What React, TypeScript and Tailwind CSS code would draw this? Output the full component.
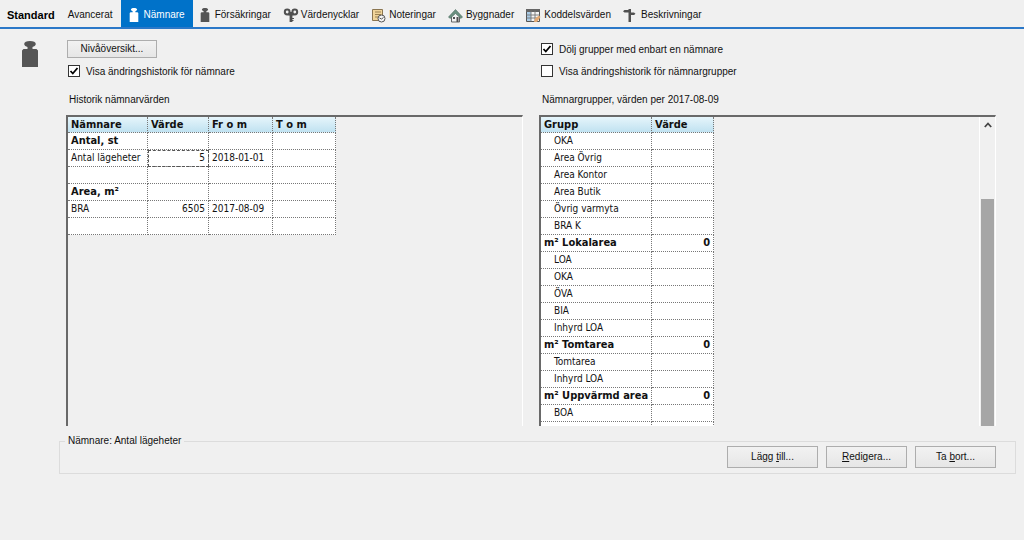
import { useState } from "react";
import type { ReactNode } from "react";

function WeightIcon({ className }: { className: string }) {
  return (
    <svg viewBox="0 0 16 26" className={className} fill="currentColor">
      <path d="M8 0c3.500 0 5.800 1.300 5.800 3S12 5.500 10.500 6v2H14.500L16 9.500V26H0V9.500L1.500 8h4V6C4 5.500 2.200 4.700 2.200 3S4.500 0 8 0z" />
    </svg>
  );
}

function KeysIcon() {
  return (
    <svg viewBox="0 0 16 16" className="h-4 w-4" fill="none" stroke="#505050" strokeWidth="2">
      <circle cx="4.200" cy="5" r="2.400" />
      <circle cx="11.800" cy="5" r="2.400" />
      <path d="M5.500 7l2.500.8L10.500 7M8 5v10" strokeWidth="2.800" />
      <path d="M9 11.500h2M9 13.500h1.500" strokeWidth="1" />
    </svg>
  );
}

function NotesIcon() {
  return (
    <svg viewBox="0 0 16 16" className="h-4 w-4" fill="none">
      <path d="M1.500 2.500h10v11h-10z" fill="#f0d49a" stroke="#8a7550" />
      <path d="M4 5h6M4 7.500h6M4 10h3" stroke="#9a8050" />
      <circle cx="10.500" cy="11.500" r="3.500" fill="#f4f4f4" stroke="#555" />
      <path d="M8.500 11l2 1 2-1.500" stroke="#555" />
    </svg>
  );
}

function HouseIcon() {
  return (
    <svg viewBox="0 0 16 16" className="h-4 w-4">
      <path d="M3.500 9l4-4 4 4v6h-8z" fill="#f2f2f2" stroke="#666" />
      <path d="M.5 10l7-7.500 7 7.500L13 11.500l-5.500-5L2 11.500z" fill="#6b9080" stroke="#4d6b60" strokeWidth=".6" />
      <path d="M5 10h2v2H5zM8.500 10h2v5h-2z" fill="#505050" />
    </svg>
  );
}

function GridIcon() {
  return (
    <svg viewBox="0 0 16 16" className="h-4 w-4" fill="none">
      <path d="M.5 2.500h13v12H.5z" fill="#f5f5f5" stroke="#555" />
      <path d="M0 2h14v3H0z" fill="#666" />
      <path d="M1 5h4v9H1z" fill="#a9cbe6" />
      <path d="M.5 8h13M.5 11h13M5 3.500v11M9 3.500v11" stroke="#777" strokeWidth=".9" />
      <path d="M8 15l1-3.500 4-3 1.500 1.500-3.500 5z" fill="#e3a972" />
    </svg>
  );
}

function SignIcon() {
  return (
    <svg viewBox="0 0 16 16" className="h-4 w-4" fill="#505050">
      <path d="M5.500 2h2.500v13H5.500zM1.500 3h4v2.500h-4L0 4.200zM8 5.500h3l1.500 1.200L11 8H8z" />
    </svg>
  );
}

const tabs: { label: string; icon: ReactNode }[] = [
  { label: "Nämnare", icon: <WeightIcon className="h-[14px] w-4" /> },
  { label: "Försäkringar", icon: <WeightIcon className="h-[14px] w-4 text-[#555]" /> },
  { label: "Värdenycklar", icon: <KeysIcon /> },
  { label: "Noteringar", icon: <NotesIcon /> },
  { label: "Byggnader", icon: <HouseIcon /> },
  { label: "Koddelsvärden", icon: <GridIcon /> },
  { label: "Beskrivningar", icon: <SignIcon /> },
];

const history = [
  { name: "Antal, st", bold: true },
  { name: "Antal lägeheter", value: "5", from: "2018-01-01", focused: true },
  { name: "" },
  { name: "Area, m²", bold: true },
  { name: "BRA", value: "6505", from: "2017-08-09" },
  { name: "" },
];

const groups = [
  { name: "OKA" },
  { name: "Area Övrig" },
  { name: "Area Kontor" },
  { name: "Area Butik" },
  { name: "Övrig varmyta" },
  { name: "BRA K" },
  { name: "m² Lokalarea", total: "0" },
  { name: "LOA" },
  { name: "OKA" },
  { name: "ÖVA" },
  { name: "BIA" },
  { name: "Inhyrd LOA" },
  { name: "m² Tomtarea", total: "0" },
  { name: "Tomtarea" },
  { name: "Inhyrd LOA" },
  { name: "m² Uppvärmd area", total: "0" },
  { name: "BOA" },
  { name: "" },
];

const tableClass = "table-fixed border-separate border-spacing-0 bg-white font-['DejaVu_Sans_Condensed','DejaVu_Sans',sans-serif] leading-4";
const thClass = "h-4 border-r border-b border-dotted border-[#777] bg-linear-to-b from-[#e6f5fb] to-[#c0e2f1] p-0 pl-[3px] text-left text-[11px] leading-[15px] font-bold";
const cellClass = "h-[17px] border-r border-b border-dotted border-[#777] p-0 px-[3px] whitespace-nowrap";
const tdClass = `text-[10px] ${cellClass}`;
const boldClass = `text-[11px] font-bold ${cellClass}`;
const buttonClass = "border border-[#adadad] bg-linear-to-b from-[#f2f2f2] to-[#e6e6e6] hover:border-[#0078d7]";

function Check({ label, initial }: { label: string; initial: boolean }) {
  const [checked, setChecked] = useState(initial);
  return (
    <label className="flex h-[22px] items-center gap-[6px]">
      <span className="relative h-3 w-3">
        <input type="checkbox" checked={checked} onChange={(e) => setChecked(e.target.checked)} className="peer block h-3 w-3 appearance-none border border-[#333] bg-white" />
        <svg viewBox="0 0 12 12" className="pointer-events-none absolute inset-0 hidden h-3 w-3 peer-checked:block" fill="none" stroke="#000" strokeWidth="1.8">
          <path d="M2.500 6l2.300 2.500L9.500 3" />
        </svg>
      </span>
      <span className="pt-px">{label}</span>
    </label>
  );
}

export default function App() {
  const [active, setActive] = useState("Nämnare");

  return (
    <div className="min-h-screen bg-[#f0f0f0] font-['Liberation_Sans',sans-serif] text-[10px] leading-4 text-[#111]">
      {/* Tabs */}
      <nav className="flex h-[29px] border-b-2 border-[#2b78c8]">
        <button className="pt-[3px] pr-[6px] pl-[7px] text-[11px] font-bold text-black">Standard</button>
        <button className="pt-[3px] pr-2 pl-[7px]">Avancerat</button>
        {tabs.map((tab) => (
          <button
            key={tab.label}
            onClick={() => setActive(tab.label)}
            className={active === tab.label ? "flex items-center gap-[2px] bg-[#0072c9] pt-[3px] pr-2 pl-[5px] text-white" : "flex items-center gap-[2px] pt-[3px] pr-2 pl-1"}
          >
            {tab.icon}
            {tab.label}
          </button>
        ))}
      </nav>

      <main className="flex pr-7">
        <div className="w-[66px] shrink-0 pt-3 pl-[22px]">
          <WeightIcon className="h-[26px] w-4 text-[#555]" />
        </div>
        <div className="grid flex-1 grid-cols-2 gap-4 pt-[9px]">
          {/* History */}
          <section>
            <div className="flex h-[22px] items-center pl-px">
              <button className={`h-[18px] w-[90px] ${buttonClass}`}>Nivåöversikt...</button>
            </div>
            <div className="pl-[2px]">
              <Check label="Visa ändringshistorik för nämnare" initial={true} />
            </div>
            <h2 className="mt-[10px] mb-[7px] pl-[3px]">Historik nämnarvärden</h2>
            <div className="h-[311px] overflow-hidden border-t-2 border-r border-l-2 border-t-[#696969] border-r-white border-l-[#696969]">
              <table className={tableClass}>
                <thead>
                  <tr>
                    <th className={`w-20 ${thClass}`}>Nämnare</th>
                    <th className={`w-[61px] ${thClass}`}>Värde</th>
                    <th className={`w-16 ${thClass}`}>Fr o m</th>
                    <th className={`w-[63px] ${thClass}`}>T o m</th>
                  </tr>
                </thead>
                <tbody>
                  {history.map((row, i) => (
                    <tr key={i}>
                      <td className={row.bold ? boldClass : tdClass}>{row.name}</td>
                      <td className={row.focused ? `text-right outline-1 -outline-offset-1 outline-dashed outline-[#555] ${tdClass}` : `text-right ${tdClass}`}>{row.value}</td>
                      <td className={tdClass}>{row.from}</td>
                      <td className={tdClass}></td>
                    </tr>
                  ))}
                </tbody>
              </table>
            </div>
          </section>

          {/* Groups */}
          <section>
            <div className="pl-[2px]">
              <Check label="Dölj grupper med enbart en nämnare" initial={true} />
              <Check label="Visa ändringshistorik för nämnargrupper" initial={false} />
            </div>
            <h2 className="mt-[10px] mb-[7px] pl-[3px]">Nämnargrupper, värden per 2017-08-09</h2>
            <div className="flex h-[311px] justify-between overflow-hidden border-t-2 border-r border-l-2 border-t-[#696969] border-r-white border-l-[#696969]">
              <div>
                <table className={tableClass}>
                  <thead>
                    <tr>
                      <th className={`w-[111px] ${thClass}`}>Grupp</th>
                      <th className={`w-[62px] ${thClass}`}>Värde</th>
                    </tr>
                  </thead>
                  <tbody>
                    {groups.map((row, i) => (
                      <tr key={i}>
                        <td className={row.total ? boldClass : tdClass}>{row.total ? row.name : <span className="pl-[10px]">{row.name}</span>}</td>
                        <td className={`text-right ${boldClass}`}>{row.total}</td>
                      </tr>
                    ))}
                  </tbody>
                </table>
              </div>
              <div className="flex w-4 flex-col border-l border-white">
                <button aria-label="Scroll up" className="flex h-4 items-center justify-center">
                  <svg viewBox="0 0 8 6" className="h-[6px] w-2" fill="none" stroke="#444" strokeWidth="1.8">
                    <path d="M.8 5L4 1.500 7.200 5" />
                  </svg>
                </button>
                <div className="mx-px mt-[66px] flex-1 bg-[#a6a6a6]" />
              </div>
            </div>
          </section>
        </div>
      </main>

      {/* Actions */}
      <fieldset className="mt-[7px] mr-2 ml-[59px] border border-[#dcdcdc] pr-[19px] pb-[5px] pl-[5px]">
        <legend className="px-[3px]">Nämnare: Antal lägeheter</legend>
        <div className="-mt-[3px] flex justify-end gap-2">
          <button className={`h-[22px] w-[91px] ${buttonClass}`}>Lägg <u>t</u>ill...</button>
          <button className={`h-[22px] w-[81px] ${buttonClass}`}><u>R</u>edigera...</button>
          <button className={`h-[22px] w-[81px] ${buttonClass}`}>Ta <u>b</u>ort...</button>
        </div>
      </fieldset>
    </div>
  );
}
